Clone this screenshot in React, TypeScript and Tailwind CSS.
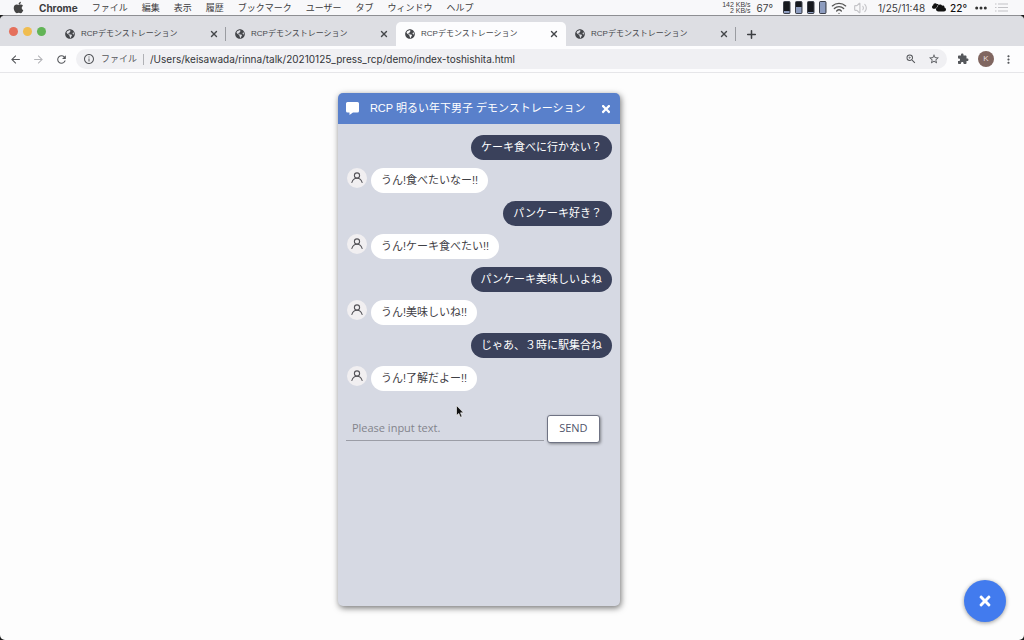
import { useState } from "react";
import { FaApple, FaCloud, FaGlobeAmericas, FaTimes } from "react-icons/fa";
import {
  MdArrowBack,
  MdArrowForward,
  MdInfoOutline,
  MdMoreVert,
  MdRefresh,
  MdStarBorder,
  MdZoomIn,
} from "react-icons/md";
import { Plus, Volume2, Wifi, X } from "lucide-react";

type Message = { from: "me" | "bot"; text: string };

const menuItems = [
  "ファイル",
  "編集",
  "表示",
  "履歴",
  "ブックマーク",
  "ユーザー",
  "タブ",
  "ウィンドウ",
  "ヘルプ",
];

const tabs = [1, 2, 3, 4];
const activeTab = 3;

const initialMessages: Message[] = [
  { from: "me", text: "ケーキ食べに行かない？" },
  { from: "bot", text: "うん!食べたいなー!!" },
  { from: "me", text: "パンケーキ好き？" },
  { from: "bot", text: "うん!ケーキ食べたい!!" },
  { from: "me", text: "パンケーキ美味しいよね" },
  { from: "bot", text: "うん!美味しいね!!" },
  { from: "me", text: "じゃあ、３時に駅集合ね" },
  { from: "bot", text: "うん!了解だよー!!" },
];

function MenuBar() {
  return (
    <header className="flex h-[15px] items-center justify-between bg-[#f8f8fa] pr-4 pl-3 text-[9px] leading-4 text-[#3c3c3e]">
      <nav className="flex items-center gap-[14px] whitespace-nowrap">
        <FaApple className="size-[13px] text-[#444]" />
        <span className="font-['Inter'] text-[10px] font-bold">Chrome</span>
        {menuItems.map((item) => (
          <span key={item}>{item}</span>
        ))}
      </nav>

      <div className="flex items-center whitespace-nowrap">
        <div className="mr-[6px] text-right text-[7px] leading-[6px]">
          142 KB/s
          <br />2 KB/s
        </div>
        <span className="mr-[10px] font-['Inter'] text-[10px]">67°</span>
        <Meters />
        <Wifi className="ml-1 h-4 w-4 text-[#555]" strokeWidth={2} />
        <Volume2 className="ml-[6px] h-[14px] w-[15px] text-[#c4c4c8]" strokeWidth={2} />
        <span className="ml-[10px] font-['Inter'] text-[10px]">1/25/11:48</span>
        <CloudIcon />
        <span className="ml-1 font-['Inter'] text-[10px] font-medium text-[#111]">22°</span>
        <svg viewBox="0 0 12 4" className="ml-2 h-1 w-3" fill="#333">
          <circle cx="1.7" cy="2" r="1.5" />
          <circle cx="6" cy="2" r="1.5" />
          <circle cx="10.3" cy="2" r="1.5" />
        </svg>
        <svg viewBox="0 0 13 9" className="ml-2 h-[9px] w-[13px]" stroke="#c2c2c6" strokeWidth="1">
          <path d="M0 1h1.5M3 1h10M0 4.5h1.5M3 4.5h10M0 8h1.5M3 8h10" />
        </svg>
      </div>
    </header>
  );
}

function CloudIcon() {
  return (
    <span className="relative ml-[7px] h-[11px] w-[14px] text-[#111]">
      <FaCloud className="absolute top-0 left-0 size-2" />
      <FaCloud
        className="absolute right-0 bottom-0 size-[10px] overflow-visible"
        stroke="#f8f8fa"
        strokeWidth={60}
        style={{ paintOrder: "stroke" }}
      />
    </span>
  );
}

// Load meters in the menu bar, fill is measured from the bottom
function Meters() {
  const fills = [2, 6, 1, 11];
  return (
    <svg viewBox="0 0 44 13" className="h-[13px] w-11">
      {fills.map((fill, i) => (
        <g key={i}>
          <rect x={i * 12 + 0.5} y="0.5" width="6.5" height="12" rx="1" fill="#16181d" stroke="#3c404b" />
          <rect x={i * 12 + 1} y={12 - fill} width="5.5" height={fill} fill="#8d9cbf" />
        </g>
      ))}
    </svg>
  );
}

function TabStrip() {
  return (
    <div className="flex h-[30px] items-end bg-[#dddee3]">
      <div className="flex h-[30px] w-14 shrink-0 items-center gap-[5px] pl-[9px]">
        <span className="size-[9px] rounded-full bg-[#e5705c]" />
        <span className="size-[9px] rounded-full bg-[#f0bd50]" />
        <span className="size-[9px] rounded-full bg-[#62b456]" />
      </div>
      {tabs.map((tab) => {
        const active = tab === activeTab;
        const divider = tab === 1 || tab === 4;
        return (
          <div
            key={tab}
            className={`relative flex h-6 w-[170px] items-center rounded-t-[5px] pr-[7px] pl-[9px] text-[#45474b] ${
              active ? "bg-[#fdfdfe]" : ""
            }`}
          >
            <FaGlobeAmericas className="size-[10px] shrink-0" />
            <span className="ml-[6px] flex-1 truncate text-[8px] leading-4">RCPデモンストレーション</span>
            <button type="button" aria-label="タブを閉じる" className="shrink-0">
              <X className="size-[10px]" strokeWidth={3.2} />
            </button>
            {divider && <span className="absolute top-[5px] right-0 h-[14px] w-px bg-[#9a9ca1]" />}
          </div>
        );
      })}
      <button type="button" aria-label="新しいタブ" className="ml-[9px] flex h-6 items-center text-[#3c3e42]">
        <Plus className="size-[13px]" strokeWidth={2.8} />
      </button>
    </div>
  );
}

function ExtensionIcon() {
  return (
    <svg viewBox="0 0 24 24" className="size-3" fill="currentColor">
      <path d="M20.5 11H19V7c0-1.1-.9-2-2-2h-4V3.5C13 2.12 11.88 1 10.5 1S8 2.12 8 3.5V5H4c-1.1 0-2 .9-2 2v3.8h1.5c1.49 0 2.7 1.21 2.7 2.7s-1.21 2.7-2.7 2.7H2V20c0 1.1.9 2 2 2h3.8v-1.5c0-1.49 1.21-2.7 2.7-2.7s2.7 1.21 2.7 2.7V22H17c1.1 0 2-.9 2-2v-4h1.5c1.38 0 2.5-1.12 2.5-2.5S21.88 11 20.5 11z" />
    </svg>
  );
}

function Toolbar() {
  return (
    <div className="flex h-[27px] items-center border-b border-[#e6e6e9] bg-[#fdfdfe] px-[9px] text-[#55575b]">
      <button type="button" aria-label="戻る">
        <MdArrowBack className="size-[13px]" />
      </button>
      <button type="button" aria-label="進む" className="ml-[10px] text-[#b4b5b9]">
        <MdArrowForward className="size-[13px]" />
      </button>
      <button type="button" aria-label="再読み込み" className="ml-[10px]">
        <MdRefresh className="size-[13px]" />
      </button>
      <div className="ml-2 flex h-5 flex-1 items-center rounded-full bg-[#f0f0f3] px-[7px]">
        <MdInfoOutline className="size-3 shrink-0" />
        <span className="ml-[6px] text-[9px] leading-4">ファイル</span>
        <span className="mx-[6px] h-[11px] w-px bg-[#b0b1b5]" />
        <input
          aria-label="アドレス"
          className="min-w-0 flex-1 bg-transparent font-['Inter'] text-[10px] text-[#333539] outline-none"
          defaultValue="/Users/keisawada/rinna/talk/20210125_press_rcp/demo/index-toshishita.html"
        />
        <button type="button" aria-label="ズーム">
          <MdZoomIn className="size-3" />
        </button>
        <button type="button" aria-label="ブックマークに追加" className="ml-[11px]">
          <MdStarBorder className="size-3" />
        </button>
      </div>
      <button type="button" aria-label="拡張機能" className="ml-[10px]">
        <ExtensionIcon />
      </button>
      <button
        type="button"
        aria-label="プロフィール"
        className="ml-[9px] flex size-4 items-center justify-center rounded-full bg-[#806660] text-[8px] text-[#e8dcd8]"
      >
        K
      </button>
      <button type="button" aria-label="メニュー" className="ml-2">
        <MdMoreVert className="size-[13px]" />
      </button>
    </div>
  );
}

function BotAvatar() {
  return (
    <span className="flex size-5 shrink-0 items-center justify-center rounded-full bg-[#f1eff1]">
      <svg viewBox="0 0 12 12" className="size-3" fill="none" stroke="#555459" strokeWidth="1.1" strokeLinecap="round">
        <circle cx="6" cy="3.5" r="2.6" />
        <path d="M0.9 10.5c.6-2.7 2.600-4.300 5.100-4.300s4.500 1.600 5.100 4.300" />
      </svg>
    </span>
  );
}

function ChatPanel() {
  const [messages, setMessages] = useState(initialMessages);
  const [draft, setDraft] = useState("");

  const handleSubmit = (e: React.FormEvent) => {
    e.preventDefault();
    if (!draft.trim()) return;
    setMessages([...messages, { from: "me", text: draft }]);
    setDraft("");
  };

  return (
    <section className="mt-5 mb-[34px] ml-[33%] flex w-[282px] flex-1 flex-col overflow-hidden rounded-[5px] bg-[#d6d9e3] text-[11px] shadow-[1px_2px_6px_rgba(0,0,0,0.55)]">
      <div className="flex h-[31px] items-center bg-[#5980cb] px-2 text-white">
        <svg viewBox="0 0 13 13" className="size-[13px]" fill="currentColor">
          <path d="M1.500 0h10A1.500 1.500 0 0 1 13 1.500v7.500a1.500 1.500 0 0 1-1.500 1.500H7l-3.500 2.500V10.500h-2A1.500 1.500 0 0 1 0 9v-7.500A1.500 1.500 0 0 1 1.500 0z" />
        </svg>
        <h1 className="ml-[11px] flex-1 whitespace-nowrap">RCP 明るい年下男子 デモンストレーション</h1>
        <button type="button" aria-label="閉じる">
          <FaTimes className="size-3" />
        </button>
      </div>

      <div className="px-2 pt-[11px]">
        <ul className="flex flex-col gap-2 pl-px">
          {messages.map((message, i) =>
            message.from === "me" ? (
              <li key={i} className="flex justify-end">
                <p className="rounded-full bg-[#3a415b] px-[10px] pb-px leading-6 text-white">{message.text}</p>
              </li>
            ) : (
              <li key={i} className="flex items-start gap-1">
                <BotAvatar />
                <p className="rounded-full bg-white px-[10px] pb-px leading-6 text-[#3f4045]">{message.text}</p>
              </li>
            ),
          )}
        </ul>

        <form onSubmit={handleSubmit} className="mt-6 flex items-start gap-[3px] font-['Open_Sans']">
          <input
            type="text"
            aria-label="メッセージ"
            value={draft}
            onChange={(e) => setDraft(e.target.value)}
            placeholder="Please input text."
            className="h-[26px] w-[198px] border-b border-[#9b9da6] bg-transparent px-[6px] text-[#333] outline-none placeholder:text-[#83848c]"
          />
          <button
            type="submit"
            className="h-7 w-[53px] rounded-[3px] border border-[#6f7384] bg-white pb-px text-[#50556b] shadow-[1px_1px_3px_rgba(0,0,0,0.4)]"
          >
            SEND
          </button>
        </form>
      </div>
    </section>
  );
}

export default function App() {
  return (
    <div className="flex min-h-screen flex-col bg-[#1a1a1a] font-['Liberation_Sans','Noto_Sans_CJK_JP',sans-serif]">
      <MenuBar />
      <div className="relative flex flex-1 flex-col overflow-hidden rounded-[5px] border-t border-[#8e8f93] bg-[#fdfdfd]">
        <TabStrip />
        <Toolbar />
        <main className="flex flex-1 flex-col">
          <ChatPanel />
        </main>
        <button
          type="button"
          aria-label="チャットを閉じる"
          className="absolute right-[18px] bottom-[18px] flex size-[42px] items-center justify-center rounded-full bg-[#427bee] text-white shadow-[0_1px_4px_rgba(0,0,0,0.4)]"
        >
          <FaTimes className="size-4" />
        </button>
        {/* Mouse pointer */}
        <svg viewBox="0 0 8 13" className="pointer-events-none absolute top-[389px] left-[456px] h-[13px] w-2">
          <path
            d="M0.500 0.500v10l2.300-2.100 1.600 3.800 1.700-.7-1.600-3.700h3z"
            fill="#111"
            stroke="#fff"
            strokeWidth="0.6"
          />
        </svg>
      </div>
    </div>
  );
}
